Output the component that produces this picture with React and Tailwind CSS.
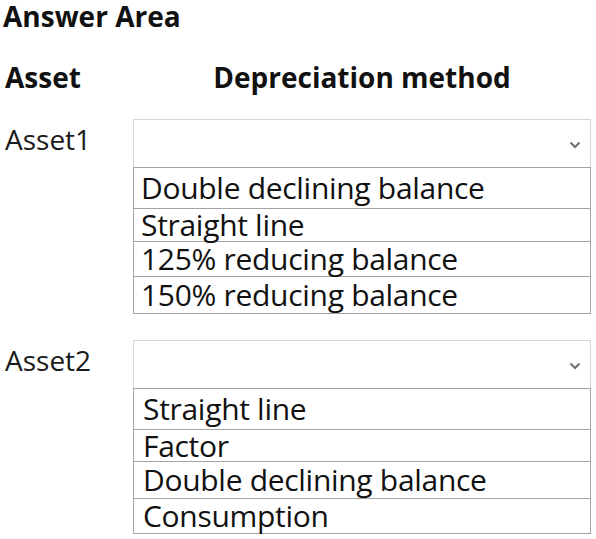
const ROWS = [
  {
    label: 'Asset1',
    options: [
      { text: 'Double declining balance', h: 'h-[40px]' },
      { text: 'Straight line', h: 'h-[33px]' },
      { text: '125% reducing balance', h: 'h-[35px]' },
      { text: '150% reducing balance', h: 'h-[37px]' },
    ],
    pad: 'pl-[7px]',
  },
  {
    label: 'Asset2',
    options: [
      { text: 'Straight line', h: 'h-[40px]' },
      { text: 'Factor', h: 'h-[32px]' },
      { text: 'Double declining balance', h: 'h-[37px]' },
      { text: 'Consumption', h: 'h-[35px]' },
    ],
    pad: 'pl-[9px]',
  },
]

const Chevron = () => (
  <svg width="12" height="8" viewBox="0 0 12 8" className="text-[#707070]">
    <path d="M1.5 1.5 L6 6 L10.5 1.5" fill="none" stroke="currentColor" strokeWidth="2" />
  </svg>
)

function AssetRow({ row, first }) {
  return (
    <div className={`flex ${first ? 'mt-[25px]' : 'mt-[26px]'}`}>
      <div className="w-[130px] pl-[2px] pt-[3px] text-[28px] leading-[34px] text-[#1a1a1a]">
        {row.label}
      </div>
      <div className="w-[458px]">
        <div className="flex h-[48px] items-center justify-end border border-b-0 border-[#d6d6d6] pr-[9px] pt-[3px]">
          <Chevron />
        </div>
        <div className="border border-[#a3a3a3]">
          {row.options.map((opt, i) => (
            <div
              key={opt.text}
              className={`flex items-center ${row.pad} ${opt.h} text-[30px] leading-[30px] tracking-[-0.3px] text-[#111] ${
                i > 0 ? 'border-t border-[#a3a3a3]' : ''
              }`}
            >
              {opt.text}
            </div>
          ))}
        </div>
      </div>
    </div>
  )
}

export default function App() {
  return (
    <div className="h-[539px] w-[596px] overflow-hidden bg-white pl-[3px] font-['Open_Sans','Noto_Sans',sans-serif]">
      <h1 className="pt-[1px] text-[28px] font-bold leading-[30px] text-[#111]">
        Answer Area
      </h1>

      <div className="mt-[29px] flex text-[28px] font-bold leading-[34px] text-[#111]">
        <div className="w-[130px] pl-[2px]">Asset</div>
        <div className="w-[458px] text-center">Depreciation method</div>
      </div>

      {ROWS.map((row, i) => (
        <AssetRow key={row.label} row={row} first={i === 0} />
      ))}
    </div>
  )
}
